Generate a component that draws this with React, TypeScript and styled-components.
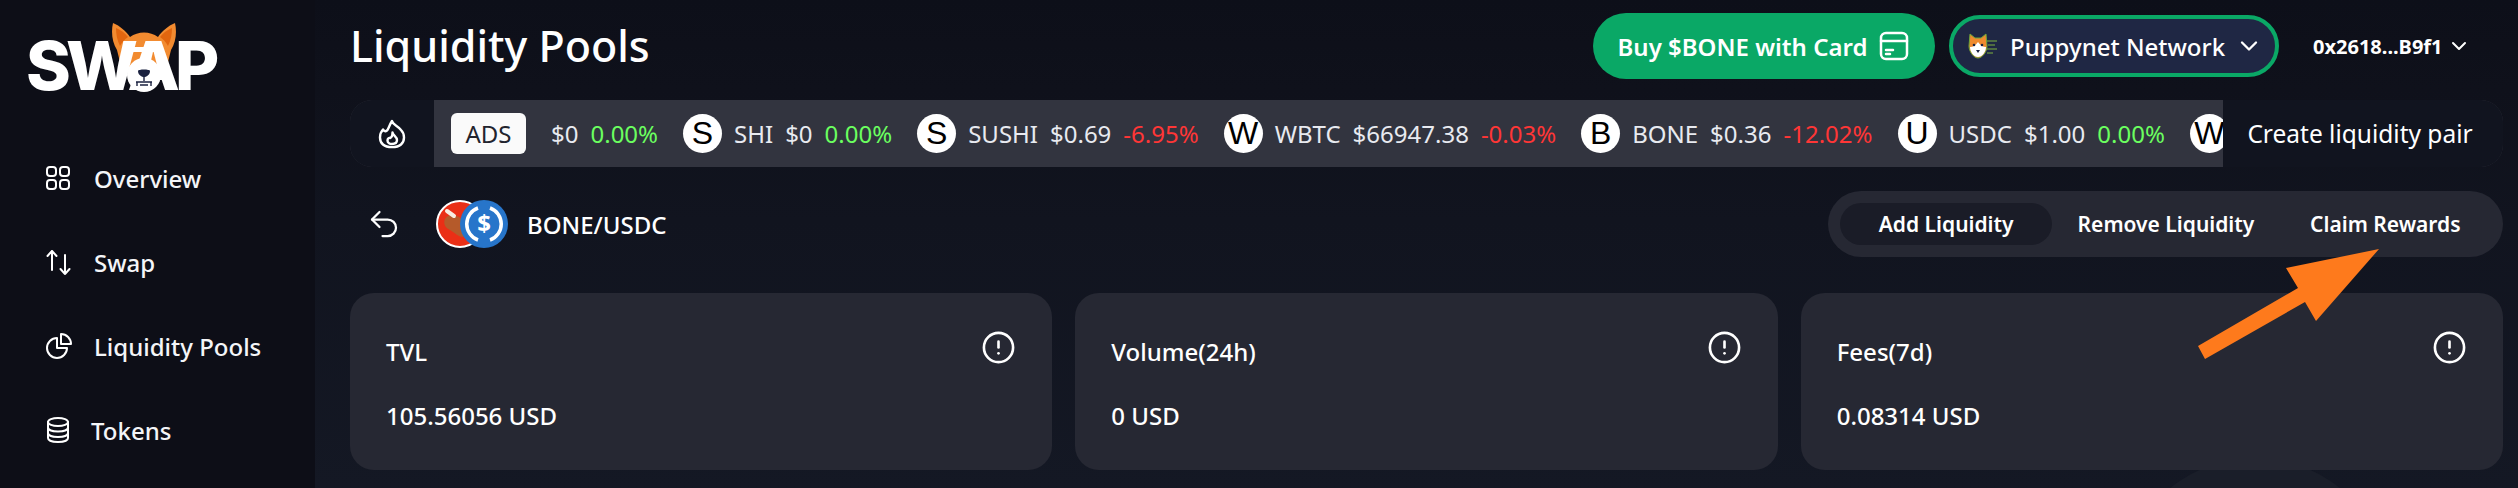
import React from 'react';
import styled, { createGlobalStyle } from 'styled-components';
import { ChevronDown, CircleAlert, Undo2 } from 'lucide-react';

const GlobalStyle = createGlobalStyle`
  html, body {
    margin: 0;
    padding: 0;
    background: #0d0e17;
  }
  * {
    box-sizing: border-box;
  }
`;

const Page = styled.div`
  display: flex;
  width: 2518px;
  height: 488px;
  overflow: hidden;
  position: relative;
  font-family: "Noto Sans", "Open Sans", sans-serif;
  color: #ffffff;
  background: #0d0e17;
`;

const Sidebar = styled.aside`
  width: 315px;
  flex-shrink: 0;
  padding-left: 28px;
  background: #0d0e17;
`;

const Logo = styled.div`
  position: relative;
  width: 189px;
  height: 70px;
  margin-top: 22px;
  margin-bottom: 86px;
`;

const LogoLayer = styled.svg`
  position: absolute;
  left: 84px;
  top: 0;
`;

const LogoText = styled.div`
  position: absolute;
  left: -2px;
  top: 9px;
  font-family: "Inter", "Liberation Sans", sans-serif;
  font-size: 68px;
  line-height: 68px;
  font-weight: 800;
  letter-spacing: -5px;
  color: #ffffff;
`;

const Nav = styled.nav`
  display: flex;
  flex-direction: column;
  gap: 84px;
`;

const NavItem = styled.div<{ $gap: number }>`
  display: flex;
  align-items: center;
  height: 0;
  padding-left: 18px;
  gap: ${(p) => p.$gap}px;
  font-size: 24px;
  font-weight: 500;
  color: #f4f5f8;
`;

const Main = styled.main`
  position: relative;
  flex: 1;
  min-width: 0;
  padding: 0 15px 0 35px;
  background: linear-gradient(180deg, #0d0f19 0%, #0f111b 90px, #11141f 220px, #141824 488px);
`;

const Dome = styled.div`
  position: absolute;
  left: 1805px;
  top: 458px;
  width: 270px;
  height: 270px;
  border-radius: 50%;
  background: #1a1e29;
`;

const Header = styled.header`
  display: flex;
  align-items: center;
  height: 92px;
`;

const Title = styled.h1`
  margin: 0;
  flex: 1;
  font-size: 43px;
  font-weight: 500;
  line-height: 96px;
  color: #ffffff;
`;

const BuyButton = styled.button`
  display: flex;
  align-items: center;
  justify-content: center;
  gap: 11px;
  width: 342px;
  height: 66px;
  margin-right: 14px;
  padding: 0;
  border: none;
  border-radius: 33px;
  background: #0aa866;
  color: #ffffff;
  font-family: inherit;
  font-size: 24px;
  font-weight: 600;
`;

const NetworkButton = styled.button`
  display: flex;
  align-items: center;
  width: 330px;
  height: 62px;
  padding: 0 12px 0 15px;
  border: 4px solid #0aa866;
  border-radius: 31px;
  background: #1f2744;
  color: #ffffff;
  font-family: inherit;
  font-size: 24px;
  font-weight: 500;
`;

const NetworkLabel = styled.span`
  flex: 1;
  margin-left: 12px;
  text-align: left;
`;

const Wallet = styled.div`
  display: flex;
  align-items: center;
  gap: 4px;
  width: 224px;
  padding-left: 34px;
  font-size: 20px;
  font-weight: 700;
`;

const Ticker = styled.div`
  display: flex;
  height: 67px;
  margin-top: 8px;
  border-radius: 22px;
  overflow: hidden;
  background: #32343f;
`;

const TickerIcon = styled.div`
  display: flex;
  align-items: center;
  justify-content: center;
  width: 84px;
  flex-shrink: 0;
  background: #11141f;
`;

const TickerTrack = styled.div`
  flex: 1;
  min-width: 0;
  display: flex;
  align-items: center;
  gap: 12px;
  padding-left: 17px;
  overflow: hidden;
  white-space: nowrap;
  font-size: 24px;
  color: #e8eaf0;
`;

const AdsTag = styled.span`
  display: flex;
  align-items: center;
  justify-content: center;
  width: 75px;
  height: 41px;
  flex-shrink: 0;
  margin-right: 13px;
  border-radius: 6px;
  background: #fafafa;
  color: #22242e;
`;

const Coin = styled.span`
  display: flex;
  align-items: center;
  justify-content: center;
  width: 39px;
  height: 39px;
  flex-shrink: 0;
  margin-left: 13px;
  border-radius: 50%;
  background: #ffffff;
  color: #000000;
  font-family: "Liberation Sans", Arial, sans-serif;
  font-size: 32px;
`;

const Change = styled.span<{ $up: boolean }>`
  color: ${(p) => (p.$up ? '#6bff5f' : '#ff3636')};
`;

const CreatePair = styled.div`
  display: flex;
  align-items: center;
  justify-content: center;
  width: 280px;
  flex-shrink: 0;
  padding-right: 6px;
  background: #11141f;
  font-size: 24.500px;
  color: #ffffff;
`;

const PairRow = styled.div`
  display: flex;
  align-items: center;
  height: 66px;
  margin-top: 24px;
`;

const BackButton = styled.div`
  display: flex;
  width: 86px;
  padding-left: 16px;
  color: #ffffff;
`;

const PairIcons = styled.div`
  position: relative;
  width: 72px;
  height: 48px;
  margin-right: 19px;
`;

const PairIcon = styled.svg<{ $left: number }>`
  position: absolute;
  top: 0;
  left: ${(p) => p.$left}px;
`;

const PairName = styled.div`
  flex: 1;
  font-size: 24px;
  font-weight: 500;
`;

const ActionGroup = styled.div`
  display: flex;
  align-items: center;
  width: 675px;
  height: 66px;
  padding: 0 12px;
  border-radius: 33px;
  background: #262833;
`;

const ActionButton = styled.div<{ $active?: boolean; $width: number }>`
  display: flex;
  align-items: center;
  justify-content: center;
  width: ${(p) => p.$width}px;
  height: 42px;
  border-radius: 21px;
  font-size: 21px;
  font-weight: 600;
  background: ${(p) => (p.$active ? '#1a1c27' : 'transparent')};
`;

const Cards = styled.section`
  position: relative;
  display: grid;
  grid-template-columns: repeat(3, 1fr);
  gap: 23px;
  margin-top: 36px;
`;

const Card = styled.div`
  display: flex;
  flex-direction: column;
  height: 177px;
  padding: 40px 36px 0 36px;
  border-radius: 24px;
  background: #262833;
`;

const CardTop = styled.div`
  display: flex;
  align-items: flex-start;
  justify-content: space-between;
  height: 64px;
  font-size: 24px;
  line-height: 38px;
  font-weight: 500;
`;

const InfoIcon = styled(CircleAlert)`
  margin-top: -3px;
`;

const CardValue = styled.div`
  font-size: 24px;
  line-height: 38px;
  font-weight: 500;
`;

const Arrow = styled.svg`
  position: absolute;
  left: 2190px;
  top: 240px;
`;

const StrokeIcon = styled.svg<{ $weight?: number }>`
  fill: none;
  stroke: #ffffff;
  stroke-width: ${(p) => p.$weight ?? 2};
  stroke-linecap: round;
  stroke-linejoin: round;
  flex-shrink: 0;
`;

const Coins = [
  { letter: 'S', name: 'SHI', price: '$0', change: '0.00%', up: true },
  { letter: 'S', name: 'SUSHI', price: '$0.69', change: '-6.95%', up: false },
  { letter: 'W', name: 'WBTC', price: '$66947.38', change: '-0.03%', up: false },
  { letter: 'B', name: 'BONE', price: '$0.36', change: '-12.02%', up: false },
  { letter: 'U', name: 'USDC', price: '$1.00', change: '0.00%', up: true },
];

const Stats = [
  { label: 'TVL', value: '105.56056 USD' },
  { label: 'Volume(24h)', value: '0 USD' },
  { label: 'Fees(7d)', value: '0.08314 USD' },
];

export default function App() {
  return (
    <Page>
      <GlobalStyle />
      <Sidebar>
        <Logo>
          <LogoLayer width="64" height="72" viewBox="0 0 64 72">
            <path d="M1 1 C-1 10 0 20 5 28 L10 48 L54 48 L59 28 C64 20 65 10 63 1 C56 4 50 9 46 15 C38 9 26 9 18 15 C14 9 8 4 1 1Z" fill="#f28b30" />
            <path d="M4 6 C4 12 5 18 8 24 C10 20 13 17 16 15 C13 11 9 8 4 6Z" fill="#e2660f" />
            <path d="M60 6 C60 12 59 18 56 24 C54 20 51 17 48 15 C51 11 55 8 60 6Z" fill="#e2660f" />
            <ellipse cx="16" cy="35" rx="3" ry="4" fill="#1b2240" />
            <ellipse cx="49" cy="35" rx="3" ry="4" fill="#1b2240" />
          </LogoLayer>
          <LogoText>SWAP</LogoText>
          <LogoLayer width="64" height="72" viewBox="0 0 64 72">
            <rect x="18" y="25" width="28" height="5" rx="2" fill="#ffffff" />
            <circle cx="32" cy="53" r="17" fill="#ffffff" />
            <path d="M26 49 C26 47 38 47 38 49 C38 53 34 55 32 55 C30 55 26 53 26 49Z" fill="#1b2240" />
            <path d="M32 55 V59 M24 60 H40 M25 60 V64 M39 60 V64 M28 63 H36" stroke="#1b2240" strokeWidth="1.400" fill="none" />
          </LogoLayer>
        </Logo>
        <Nav>
          <NavItem $gap={24}>
            <StrokeIcon width="24" height="24" viewBox="0 0 24 24">
              <rect x="1" y="1" width="9" height="9" rx="3" />
              <rect x="14" y="1" width="9" height="9" rx="3" />
              <rect x="1" y="14" width="9" height="9" rx="3" />
              <rect x="14" y="14" width="9" height="9" rx="3" />
            </StrokeIcon>
            Overview
          </NavItem>
          <NavItem $gap={22}>
            <StrokeIcon width="26" height="26" viewBox="0 0 26 26">
              <path d="M6 21 V2 M1.500 7 L6 2 L10.500 7" />
              <path d="M19 6 V25 M14.500 20 L19 25 L23.500 20" />
            </StrokeIcon>
            Swap
          </NavItem>
          <NavItem $gap={22}>
            <StrokeIcon width="26" height="26" viewBox="0 0 26 26">
              <path d="M11 5 A10 10 0 1 0 21 15 H11 Z" />
              <path d="M15 1 A10 10 0 0 1 25 11 H15 Z" />
            </StrokeIcon>
            Liquidity Pools
          </NavItem>
          <NavItem $gap={21}>
            <StrokeIcon width="24" height="26" viewBox="0 0 24 26">
              <ellipse cx="12" cy="5" rx="10" ry="4" />
              <path d="M2 5 V21 C2 23.500 6.500 25 12 25 C17.500 25 22 23.500 22 21 V5" />
              <path d="M2 10.500 C2 13 6.500 14.500 12 14.500 C17.500 14.500 22 13 22 10.500" />
              <path d="M2 16 C2 18.500 6.500 20 12 20 C17.500 20 22 18.500 22 16" />
            </StrokeIcon>
            Tokens
          </NavItem>
        </Nav>
      </Sidebar>

      <Main>
        <Dome />
        <Header>
          <Title>Liquidity Pools</Title>
          <BuyButton>
            Buy $BONE with Card
            <StrokeIcon $weight={2.500} width="32" height="32" viewBox="0 0 32 32">
              <rect x="3" y="3" width="26" height="26" rx="5" />
              <path d="M3 11 H29 M8 20 H15 M8 24 H12" />
            </StrokeIcon>
          </BuyButton>
          <NetworkButton>
            <svg width="30" height="26" viewBox="0 0 30 26">
              <path d="M2 1 L7 5 H13 L18 1 L19 13 C19 19 14 25 10 25 C6 25 1 19 1 13Z" fill="#ef8a2e" stroke="#6da53a" strokeWidth="1" />
              <path d="M2 14 C5 14 8 12 10 9 C12 12 15 14 18 14 C18 19 14 24 10 24 C6 24 2 19 2 14Z" fill="#ffffff" />
              <circle cx="6" cy="12" r="1.300" fill="#1b2240" />
              <circle cx="14" cy="12" r="1.300" fill="#1b2240" />
              <path d="M8 17 H12 L10 20Z" fill="#1b2240" />
              <path d="M19 8 H29 M20 12 H27 M19 16 H29 M19 20 H25" stroke="#7fb13f" strokeWidth="1.200" />
            </svg>
            <NetworkLabel>Puppynet Network</NetworkLabel>
            <ChevronDown size={28} strokeWidth={2} />
          </NetworkButton>
          <Wallet>
            0x2618...B9f1
            <ChevronDown size={24} strokeWidth={2} />
          </Wallet>
        </Header>

        <Ticker>
          <TickerIcon>
            <StrokeIcon $weight={2.400} width="28" height="30" viewBox="0 0 28 30">
              <path d="M14 2 C15 6 19 6 23 11 C27 15 27 22 23 25.500 C19 29 9 29 5 25.500 C1 22 1 15 5 10.500 C6.500 12.500 8 13 9.500 11 C11 8.500 12 5 14 2Z" />
              <path d="M14.500 13.500 C15 16.500 19 17.500 19 21 C19 24 16.500 25 14 25 C11.500 25 9.500 23.500 9.500 21.500 C9.500 19.500 11 18.500 12 19 C13.500 18.500 14.500 16.500 14.500 13.500Z" />
            </StrokeIcon>
          </TickerIcon>
          <TickerTrack>
            <AdsTag>ADS</AdsTag>
            <span>$0</span>
            <Change $up>0.00%</Change>
            {Coins.map((coin) => (
              <React.Fragment key={coin.name}>
                <Coin>{coin.letter}</Coin>
                <span>{coin.name}</span>
                <span>{coin.price}</span>
                <Change $up={coin.up}>{coin.change}</Change>
              </React.Fragment>
            ))}
            <Coin>W</Coin>
          </TickerTrack>
          <CreatePair>Create liquidity pair</CreatePair>
        </Ticker>

        <PairRow>
          <BackButton>
            <Undo2 size={36} strokeWidth={1.500} />
          </BackButton>
          <PairIcons>
            <PairIcon $left={0} width="48" height="48" viewBox="0 0 48 48">
              <circle cx="24" cy="24" r="23" fill="#ea2f16" stroke="#ffffff" strokeWidth="2" />
              <path d="M9 19 C12 13 22 14 26 20 C29 25 29 34 27 37 C22 37 18 32 14 30 C9 28 7 23 9 19Z" fill="#b55a2a" />
              <path d="M11 11 L18 16" stroke="#f7ece0" strokeWidth="4" strokeLinecap="round" />
            </PairIcon>
            <PairIcon $left={24} width="48" height="48" viewBox="0 0 48 48">
              <circle cx="24" cy="24" r="24" fill="#2775ca" />
              <path d="M18 8 A17 17 0 0 0 18 40 M30 8 A17 17 0 0 1 30 40" fill="none" stroke="#ffffff" strokeWidth="3.500" />
              <text x="24" y="32" textAnchor="middle" fontSize="24" fontWeight="700" fontFamily="Noto Sans, sans-serif" fill="#ffffff">$</text>
            </PairIcon>
          </PairIcons>
          <PairName>BONE/USDC</PairName>
          <ActionGroup>
            <ActionButton $active $width={213}>Add Liquidity</ActionButton>
            <ActionButton $width={228}>Remove Liquidity</ActionButton>
            <ActionButton $width={212}>Claim Rewards</ActionButton>
          </ActionGroup>
        </PairRow>

        <Cards>
          {Stats.map((stat) => (
            <Card key={stat.label}>
              <CardTop>
                {stat.label}
                <InfoIcon size={35} strokeWidth={1.800} />
              </CardTop>
              <CardValue>{stat.value}</CardValue>
            </Card>
          ))}
        </Cards>
      </Main>

      <Arrow width="200" height="130" viewBox="0 0 200 130">
        <polygon points="189,9 96,28 108,48 8,106 15,119 115,62 126,81" fill="#fe7a1c" />
      </Arrow>
    </Page>
  );
}
